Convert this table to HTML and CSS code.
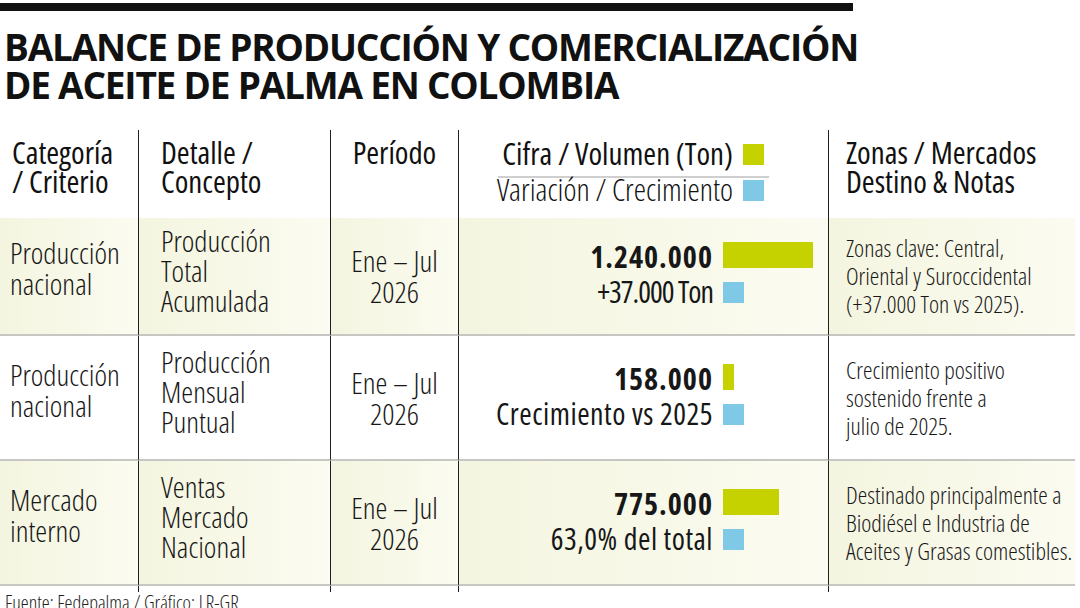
FILE: index.html
```html
<!DOCTYPE html>
<html lang="es">
<head>
<meta charset="utf-8">
<title>Balance de producción y comercialización de aceite de palma en Colombia</title>
<link rel="stylesheet" href="styles.css">
</head>
<body>
<div class="topbar"></div>
<h1 class="title">BALANCE DE PRODUCCIÓN Y COMERCIALIZACIÓN<br>DE ACEITE DE PALMA EN COLOMBIA</h1>
<div class="table">
  <div class="cell head c1">Categoría<br>/ Criterio</div>
  <div class="cell head c2">Detalle /<br>Concepto</div>
  <div class="cell head c3">Período</div>
  <div class="cell head c4">
    <div class="legend">
      <div class="leg-row leg-top"><span class="leg-label">Cifra / Volumen (Ton)</span><i class="sq green"></i></div>
      <div class="leg-row leg-bottom"><span class="leg-label">Variación / Crecimiento</span><i class="sq blue"></i></div>
    </div>
  </div>
  <div class="cell head c5">Zonas / Mercados<br>Destino &amp; Notas</div>

  <div class="cell shade c1">Producción<br>nacional</div>
  <div class="cell shade c2">Producción<br>Total<br>Acumulada</div>
  <div class="cell shade c3">Ene – Jul<br>2026</div>
  <div class="cell shade c4">
    <div class="vline"><span class="vlabel num">1.240.000</span><i class="bar green" style="width:90px"></i></div>
    <div class="vline"><span class="vlabel tight">+37.000 Ton</span><i class="sq blue"></i></div>
  </div>
  <div class="cell shade c5 note">Zonas clave: Central,<br>Oriental y Suroccidental<br>(+37.000 Ton vs 2025).</div>

  <div class="cell c1">Producción<br>nacional</div>
  <div class="cell c2">Producción<br>Mensual<br>Puntual</div>
  <div class="cell c3">Ene – Jul<br>2026</div>
  <div class="cell c4">
    <div class="vline"><span class="vlabel num">158.000</span><i class="bar green" style="width:11px"></i></div>
    <div class="vline"><span class="vlabel">Crecimiento vs 2025</span><i class="sq blue"></i></div>
  </div>
  <div class="cell c5 note">Crecimiento positivo<br>sostenido frente a<br>julio de 2025.</div>

  <div class="cell shade c1">Mercado<br>interno</div>
  <div class="cell shade c2">Ventas<br>Mercado<br>Nacional</div>
  <div class="cell shade c3">Ene – Jul<br>2026</div>
  <div class="cell shade c4">
    <div class="vline"><span class="vlabel num">775.000</span><i class="bar green" style="width:56px"></i></div>
    <div class="vline"><span class="vlabel">63,0% del total</span><i class="sq blue"></i></div>
  </div>
  <div class="cell shade c5 note">Destinado principalmente a<br>Biodiésel e Industria de<br>Aceites y Grasas comestibles.</div>

  <div class="cell tail c1"></div>
  <div class="cell tail c2"></div>
  <div class="cell tail c3"></div>
  <div class="cell tail c4"></div>
  <div class="cell tail c5"></div>
</div>
<div class="source">Fuente: Fedepalma / Gráfico: LR-GR</div>
</body>
</html>
```

FILE: styles.css
```css
* { box-sizing: border-box; }
html, body { margin: 0; padding: 0; background: #ffffff; }
body {
  width: 1080px;
  height: 608px;
  overflow: hidden;
  color: #171717;
  font-family: "Open Sans", "Roboto", sans-serif;
  font-stretch: 75%;
}
.topbar {
  width: 853px;
  height: 8px;
  margin-top: 3px;
  background: #111111;
}
.title {
  margin: 17px 0 0 4px;
  font-family: "Open Sans", "Liberation Sans", sans-serif;
  font-stretch: 100%;
  font-weight: 700;
  font-size: 37px;
  line-height: 38px;
  letter-spacing: -1.2px;
  color: #111111;
  white-space: nowrap;
}
.table {
  margin-top: 26px;
  width: 1075px;
  display: grid;
  grid-template-columns: 138px 192px 128px 370px 247px;
  grid-template-rows: 88px 118px 125px 125px 6px;
}
.cell {
  display: flex;
  flex-direction: column;
  justify-content: center;
  font-size: 30px;
  line-height: 31px;
  font-weight: 300;
  white-space: nowrap;
  border-bottom: 2px solid #c6c6c2;
}
.cell.c2, .cell.c3, .cell.c4, .cell.c5 { border-left: 1px solid #1e1e1e; }
.c1 { padding-left: 10px; padding-bottom: 16px; }
.c2 { padding-left: 22px; padding-bottom: 11px; line-height: 30px; }
.c3 { align-items: center; text-align: center; }
.c5 { padding-left: 17px; }
.head {
  justify-content: flex-start;
  padding-top: 8px;
  padding-bottom: 0;
  font-size: 31px;
  line-height: 29px;
  font-weight: 400;
  border-bottom: none;
  color: #111111;
}
.head.c1 { padding-left: 12px; }
.shade { background: linear-gradient(to right, #f4f5e0 0%, #f8f8e8 50%, #fbfbf1 100%); }
.tail { border-bottom: none; padding: 0; }
.note {
  font-size: 24px;
  line-height: 28px;
  font-weight: 300;
}
.legend {
  margin-left: 39px;
  width: 271px;
}
.leg-row {
  display: flex;
  justify-content: flex-end;
  align-items: baseline;
  padding-right: 5px;
  line-height: 30px;
  white-space: nowrap;
}
.leg-top {
  height: 40px;
  border-bottom: 2px solid #cfcfcf;
}
.leg-bottom { line-height: 22px; }
.leg-label {
  flex: none;
  margin-right: 10px;
}
.leg-bottom .leg-label { font-weight: 300; }
.sq, .bar {
  display: inline-block;
  flex: none;
}
.sq {
  width: 21px;
  height: 21px;
  margin-bottom: -3px;
}
.bar {
  height: 26px;
}
.green { background: #c6d200; }
.blue { background: #80c9e6; }
.cell.c4 { padding-bottom: 0; }
.c4:not(.head) { align-items: flex-start; }
.vline {
  display: flex;
  align-items: baseline;
  height: 35px;
}
.vlabel {
  width: 254px;
  margin-right: 10px;
  text-align: right;
  font-weight: 400;
  font-size: 30px;
  letter-spacing: 0.5px;
}
.vlabel.tight { letter-spacing: -1px; }
.vlabel.num {
  font-weight: 700;
  font-size: 30px;
  letter-spacing: 1px;
}
.source {
  margin: 0 0 0 5px;
  font-size: 20px;
  line-height: 22px;
  font-weight: 300;
  color: #222222;
}
```
